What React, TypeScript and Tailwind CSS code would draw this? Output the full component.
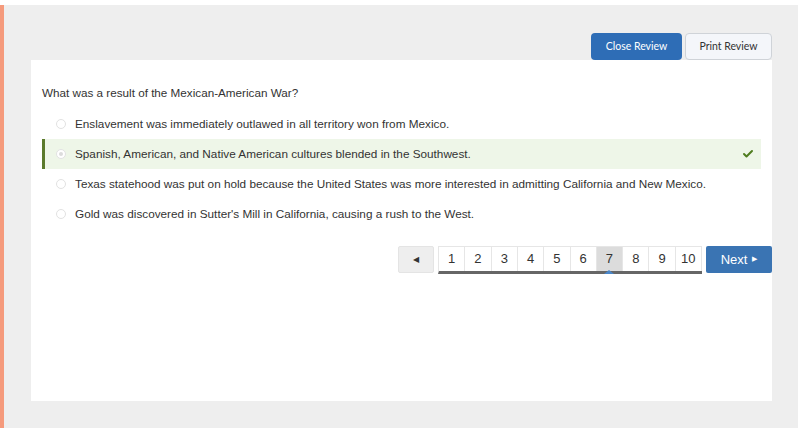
import { Check } from 'lucide-react'

const options = [
  'Enslavement was immediately outlawed in all territory won from Mexico.',
  'Spanish, American, and Native American cultures blended in the Southwest.',
  'Texas statehood was put on hold because the United States was more interested in admitting California and New Mexico.',
  "Gold was discovered in Sutter's Mill in California, causing a rush to the West.",
]

const pages = [1, 2, 3, 4, 5, 6, 7, 8, 9, 10]

export default function App() {
  return (
    <div className="w-[800px] h-[429px] bg-white pt-[5px] font-['Liberation_Sans',Arial,sans-serif] text-[#333]">
      <div className="flex h-[423px] w-[798px]">
        <div className="w-[4px] bg-[#f59a7c] shrink-0" />
        <div className="flex-1 bg-[#eeeeee] pl-[27px] pt-[28px]">
          <div className="w-[741px]">
            <div className="flex justify-end gap-[3px] font-['Lato',sans-serif] text-[10.5px]">
              <button className="w-[91px] h-[27px] rounded-[4px] bg-[#2e6db6] text-white">
                Close Review
              </button>
              <button className="w-[87px] h-[27px] rounded-[4px] bg-[#f4f6fa] border border-[#cfd3d8] text-[#333]">
                Print Review
              </button>
            </div>

            <div className="h-[341px] bg-white pl-[11px] pt-[24px]">
              <p className="text-[11.7px] leading-[18px]">What was a result of the Mexican-American War?</p>

              <div className="mt-[7px] w-[719px]">
                {options.map((text, i) => {
                  const selected = i === 1
                  return (
                    <div
                      key={i}
                      className={
                        selected
                          ? 'flex items-center h-[30px] border-l-[3px] border-[#5b7a2c] bg-[#eef6e8]'
                          : 'flex items-center h-[30px] border-l-[3px] border-transparent'
                      }
                    >
                      <span className="ml-[11px] w-[10px] h-[10px] rounded-full border border-[#e2e2e2] bg-white flex items-center justify-center shrink-0">
                        {selected && <span className="w-[4px] h-[4px] rounded-full bg-[#dcdcdc]" />}
                      </span>
                      <span className="ml-[9px] text-[11.75px] flex-1 whitespace-nowrap">{text}</span>
                      {selected && (
                        <Check className="mr-[7px] text-[#4f7d1f]" size={12} strokeWidth={4} />
                      )}
                    </div>
                  )
                })}
              </div>

              <div className="mt-[17px] flex justify-end items-start gap-[4px] text-[13px]">
                <button className="w-[36px] h-[27px] bg-[#eeeeee] border border-[#e4e4e4] rounded-[2px] text-[8px] text-[#333]">
                  ◀
                </button>
                <div className="flex border-b-[3px] border-[#666] h-[28px] border-l border-l-[#e6e6e6]">
                  {pages.map((p) => (
                    <div
                      key={p}
                      className={
                        (p === 7 ? 'bg-[#dcdcdc] ' : 'bg-white ') +
                        'relative w-[26.3px] h-[25px] flex items-center justify-center border-r border-t border-[#e6e6e6]'
                      }
                    >
                      {p}
                      {p === 7 && (
                        <span className="absolute bottom-[-3px] left-1/2 -translate-x-1/2 w-0 h-0 border-l-[5px] border-r-[5px] border-b-[4px] border-l-transparent border-r-transparent border-b-[#4a86c8]" />
                      )}
                    </div>
                  ))}
                </div>
                <button className="w-[66px] h-[27px] bg-[#3a74b3] rounded-[2px] text-white text-[13px] flex items-center justify-center gap-[5px]">
                  Next <span className="text-[7px]">▶</span>
                </button>
              </div>
            </div>
          </div>
        </div>
      </div>
    </div>
  )
}
